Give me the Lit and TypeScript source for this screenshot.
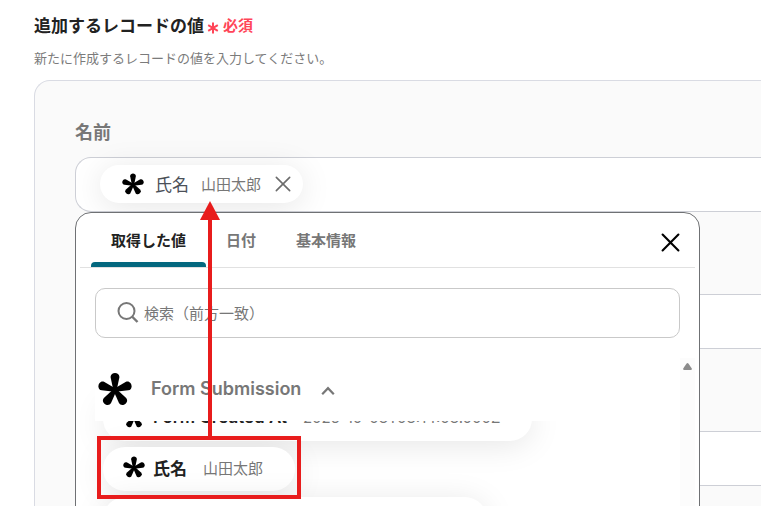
import { LitElement, html, css, svg } from "lit";
import { customElement } from "lit/decorators.js";

const petals = [0, 72, 144, 216, 288].map(
  (a) => svg`<path transform="rotate(${a} 16 17)" d="M14.4 17 L11.9 5.2 C11.1 -0.6 20.9 -0.6 20.1 5.2 L17.6 17 Z"/>`
);

const mark = (cls: string) => html`<svg class=${cls} viewBox="0 0 32 32" aria-hidden="true">${petals}<circle cx="16" cy="17" r="3"/></svg>`;

const cross = (width: number) => html`<svg class="cross" viewBox="0 0 18 18" aria-hidden="true">
  <path d="M1.5 1.5 L16.5 16.5 M16.5 1.5 L1.5 16.5" fill="none" stroke="currentColor" stroke-width=${width} stroke-linecap="round"/>
</svg>`;

@customElement("app-root")
export class AppRoot extends LitElement {
  static styles = css`
    :host {
      display: block;
      position: relative;
      height: 100vh;
      overflow: hidden;
      background: #fff;
      color: #222;
      font-family: Inter, "Noto Sans CJK JP", sans-serif;
    }
    * { box-sizing: border-box; }
    button { font: inherit; color: inherit; background: none; border: 0; padding: 0; margin: 0; cursor: pointer; }
    main { padding: 12px 0 0 34px; }
    .title { display: flex; align-items: center; gap: 3px; margin: 0; font-size: 17px; line-height: 28px; font-weight: 600; }
    .required { display: flex; align-items: center; gap: 4px; font-size: 15px; color: #ff4558; }
    .required svg { width: 12px; height: 12px; margin-top: 4px; }
    .hint { margin: 8px 0 12px; font-size: 13px; line-height: 20px; color: #7b7b7b; }
    .card {
      display: flex; flex-direction: column; gap: 82px;
      padding: 40px 0 80px 40px;
      background: #fafafa;
      border: 1px solid #d9dbe3; border-right: 0;
      border-radius: 16px 0 0 0;
    }
    .field { position: relative; }
    .label { display: block; margin-bottom: 12px; font-size: 18px; line-height: 24px; font-weight: 600; color: #777; }
    .box {
      display: flex; align-items: center; width: 100%; height: 55px;
      padding: 0 24px 2px; background: #fff;
      border: 1px solid #cdcfd6; border-right: 0; border-radius: 16px 0 0 16px;
    }
    .chip {
      display: flex; align-items: center; width: max-content; background: #fff;
      border-radius: 22px; box-shadow: 0 4px 32px rgba(0, 0, 0, 0.1);
    }
    .chip .value { font-size: 15px; color: #777; }
    .picked { height: 38px; padding: 0 12px 0 22px; }
    .picked .name { margin: 0 12px 0 11px; font-size: 17px; color: #4b5058; }
    .picked button { display: flex; margin-left: 14px; color: #6c6c6c; }
    .picked .cross { width: 16px; height: 16px; }
    .small { width: 22px; height: 22px; }
    .menu {
      position: absolute; top: 91px; left: 0; z-index: 0; width: 625px; height: 420px;
      padding: 0 4px; background: #fff; overflow: hidden;
      border: 1px solid #6f7174; border-radius: 16px;
    }
    .tabs { display: flex; align-items: stretch; height: 55px; padding: 0 15px 0 11px; border-bottom: 1px solid #e1e1e1; }
    .tab { position: relative; padding: 0 20px 2px; font-size: 15px; font-weight: 600; color: #777; }
    .tab.on { color: #222; }
    .tab.on::after { content: ""; position: absolute; left: 0; right: 0; bottom: 0; height: 5px; background: #03687f; border-radius: 4px 4px 0 0; }
    .close { display: flex; align-items: center; margin-left: auto; padding-top: 4px; color: #000; }
    .close .cross { width: 19px; height: 19px; }
    .search {
      display: flex; align-items: center; gap: 4px; height: 50px; margin: 20px 15px;
      padding: 0 20px; border: 1px solid #c9c9c9; border-radius: 10px; color: #777;
    }
    .search svg { width: 24px; height: 24px; }
    .search input { flex: 1; min-width: 0; border: 0; outline: 0; padding: 0; background: none; font: inherit; font-size: 15px; color: #222; }
    .search input::placeholder { color: #777; opacity: 1; }
    .results { display: flex; height: 280px; }
    .list { flex: 1; min-width: 0; padding: 0 15px; overflow: hidden; }
    .group {
      position: relative; z-index: 1; display: flex; align-items: center; width: 100%; height: 63px;
      margin-bottom: -24px; padding: 0 0 2px 3px; background: #fff;
      font-size: 18px; font-weight: 600; color: #777;
    }
    .large { width: 34px; height: 34px; margin-right: 19px; color: #000; fill: #000; }
    .group .caret { width: 14px; height: 10px; margin-left: 20px; margin-top: 4px; }
    .options { list-style: none; display: flex; flex-direction: column; gap: 6px; margin: 0; padding: 0 0 0 8px; }
    .option { height: 44px; padding: 0 32px 4px 20px; }
    .option .name { margin: 0 16px 0 8px; font-size: 17px; font-weight: 600; }
    .blank { width: 384px; }
    .track { width: 15px; padding-top: 5px; background: #fcfcfc; }
    .track svg { display: block; width: 9px; height: 7px; margin: 0 auto; }
    .callout { position: absolute; z-index: 2; left: 97px; top: 201px; width: 204px; height: 298px; pointer-events: none; }
  `;

  render() {
    return html`
      <main>
        <h2 class="title">
          追加するレコードの値
          <span class="required">
            <svg viewBox="0 0 12 12" aria-hidden="true"><path d="M6 .5V11.5 M1.2 3.2L10.8 8.8 M10.8 3.2L1.2 8.8" stroke="currentColor" stroke-width="2"/></svg>
            必須
          </span>
        </h2>
        <p class="hint">新たに作成するレコードの値を入力してください。</p>
        <section class="card">
          <div class="field">
            <span class="label" id="name-label">名前</span>
            <div class="box" role="group" aria-labelledby="name-label">
              <div class="chip picked">
                ${mark("small")}<span class="name">氏名</span><span class="value">山田太郎</span>
                <button aria-label="削除">${cross(1.8)}</button>
              </div>
            </div>
            <div class="menu">
              <div class="tabs" role="tablist">
                <button class="tab on" role="tab" aria-selected="true">取得した値</button>
                <button class="tab" role="tab">日付</button>
                <button class="tab" role="tab">基本情報</button>
                <button class="close" aria-label="閉じる">${cross(2)}</button>
              </div>
              <label class="search">
                <svg viewBox="0 0 24 24" aria-hidden="true" fill="none" stroke="currentColor" stroke-width="2"><circle cx="10.5" cy="10" r="8"/><path d="M16 15.5L21.5 21" stroke-width="2.4"/></svg>
                <input type="text" placeholder="検索（前方一致）" aria-label="検索" />
              </label>
              <div class="results">
                <div class="list">
                  <button class="group">
                    ${mark("large")}Form Submission
                    <svg class="caret" viewBox="0 0 14 10" aria-hidden="true"><path d="M1.2 8.2L7 2.2L12.8 8.2" fill="none" stroke="currentColor" stroke-width="2.2"/></svg>
                  </button>
                  <ul class="options">
                    <li><button class="chip option">${mark("small")}<span class="name">Form Created At</span><span class="value">2025-10-08T08:14:08.000Z</span></button></li>
                    <li><button class="chip option">${mark("small")}<span class="name">氏名</span><span class="value">山田太郎</span></button></li>
                    <li class="chip option blank"></li>
                  </ul>
                </div>
                <div class="track"><svg viewBox="0 0 9 7" aria-hidden="true"><path d="M3.6 .6Q4.5 -.4 5.4 .6L8.8 5.4Q9 7 8 7H1Q0 7 .2 5.4Z" fill="#8b8b8b"/></svg></div>
              </div>
            </div>
          </div>
          <input class="box" type="text" aria-label="値 2" />
          <input class="box" type="text" aria-label="値 3" />
        </section>
      </main>
      <svg class="callout" viewBox="0 0 204 298" aria-hidden="true">
        <path d="M113 0L123 19H103Z" fill="#e81c1c"/>
        <path d="M113 18V236" stroke="#e81c1c" stroke-width="4"/>
        <rect x="2" y="237" width="200" height="59" fill="none" stroke="#e81c1c" stroke-width="4"/>
      </svg>
    `;
  }
}
